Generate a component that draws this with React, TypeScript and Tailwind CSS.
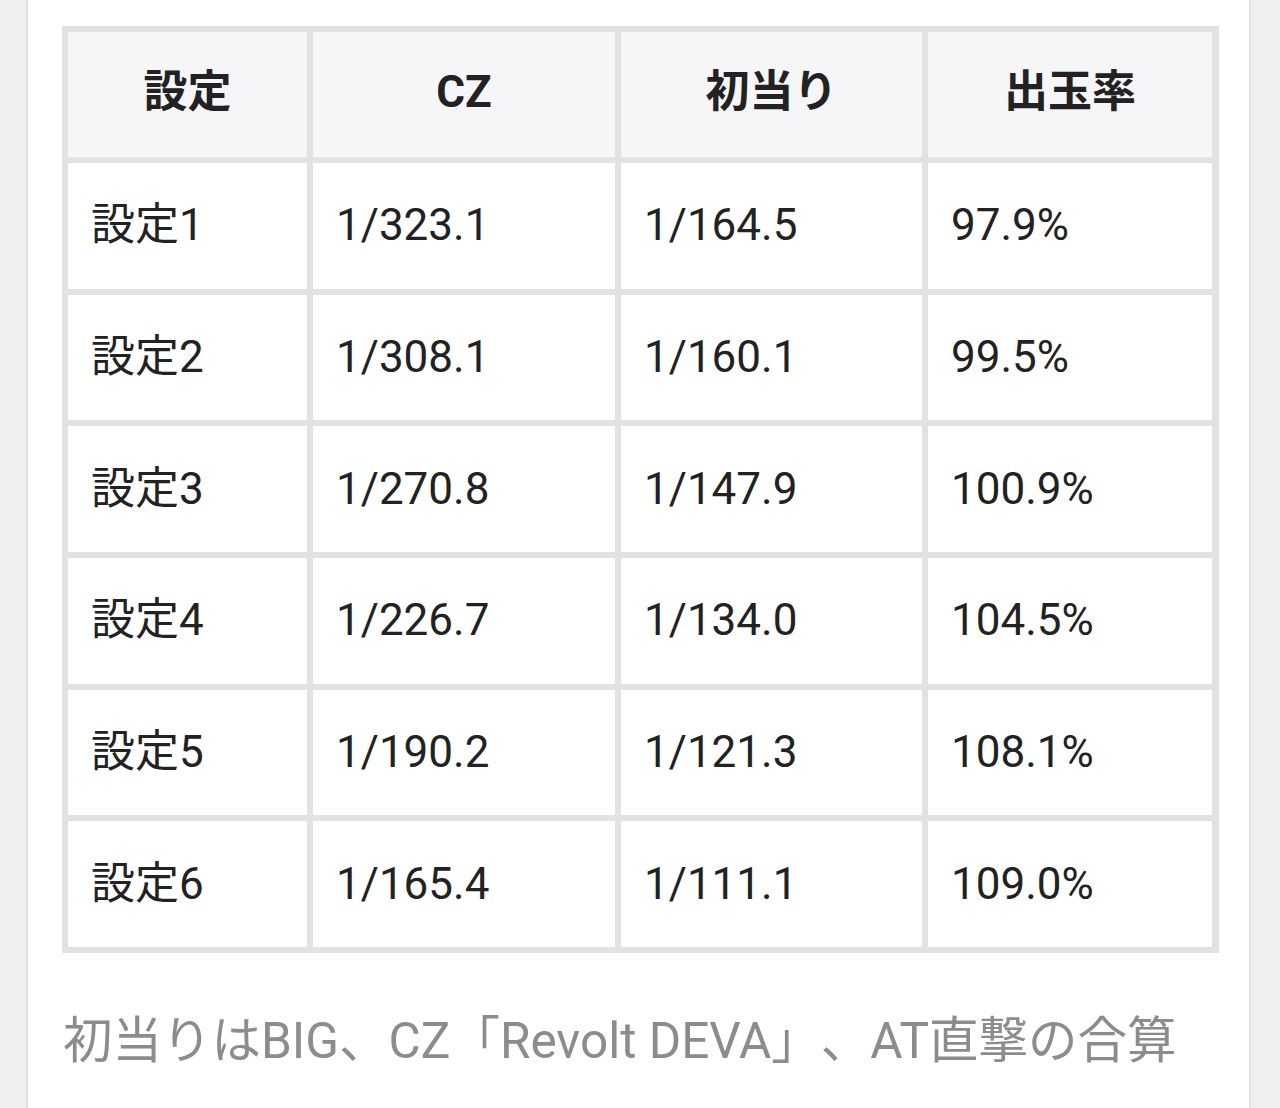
const rows = [
  { label: '設定1', cz: '1/323.1', first: '1/164.5', rate: '97.9%' },
  { label: '設定2', cz: '1/308.1', first: '1/160.1', rate: '99.5%' },
  { label: '設定3', cz: '1/270.8', first: '1/147.9', rate: '100.9%' },
  { label: '設定4', cz: '1/226.7', first: '1/134.0', rate: '104.5%' },
  { label: '設定5', cz: '1/190.2', first: '1/121.3', rate: '108.1%' },
  { label: '設定6', cz: '1/165.4', first: '1/111.1', rate: '109.0%' },
];

const headers = ['設定', 'CZ', '初当り', '出玉率'];

export default function App() {
  return (
    <div
      className="min-h-[1108px] bg-[#efefef] pl-[26px]"
      style={{ fontFamily: 'Roboto, "Noto Sans CJK JP", sans-serif' }}
    >
      <div className="min-h-[1108px] w-[1225px] border-x-2 border-[#e3e3e3] bg-white pl-[34px] pt-[26px]">
        {/* spec table */}
        <div className="grid w-[1157px] grid-cols-[239px_302px_301px_284px] gap-[6px] bg-[#e2e2e2] p-[6px]">
          {headers.map((h) => (
            <div
              key={h}
              className="flex h-[125px] items-center justify-center bg-[#f6f6f8] pb-[5px] text-[44px] font-bold text-[#222222]"
            >
              {h}
            </div>
          ))}
          {rows.map((r) => (
            <div key={r.label} className="contents">
              {[r.label, r.cz, r.first, r.rate].map((v, i) => (
                <div
                  key={i}
                  className="flex h-[125.67px] items-center bg-white pb-[1px] pl-[23px] text-[44px] text-[#222222]"
                >
                  {v}
                </div>
              ))}
            </div>
          ))}
        </div>

        <p className="mt-[51px] pl-[1px] text-[49.5px] leading-[74px] text-[#8c8c8c] [text-spacing-trim:space-all]">
          初当りはBIG、CZ「Revolt DEVA」、AT直撃の合算
        </p>
      </div>
    </div>
  );
}
